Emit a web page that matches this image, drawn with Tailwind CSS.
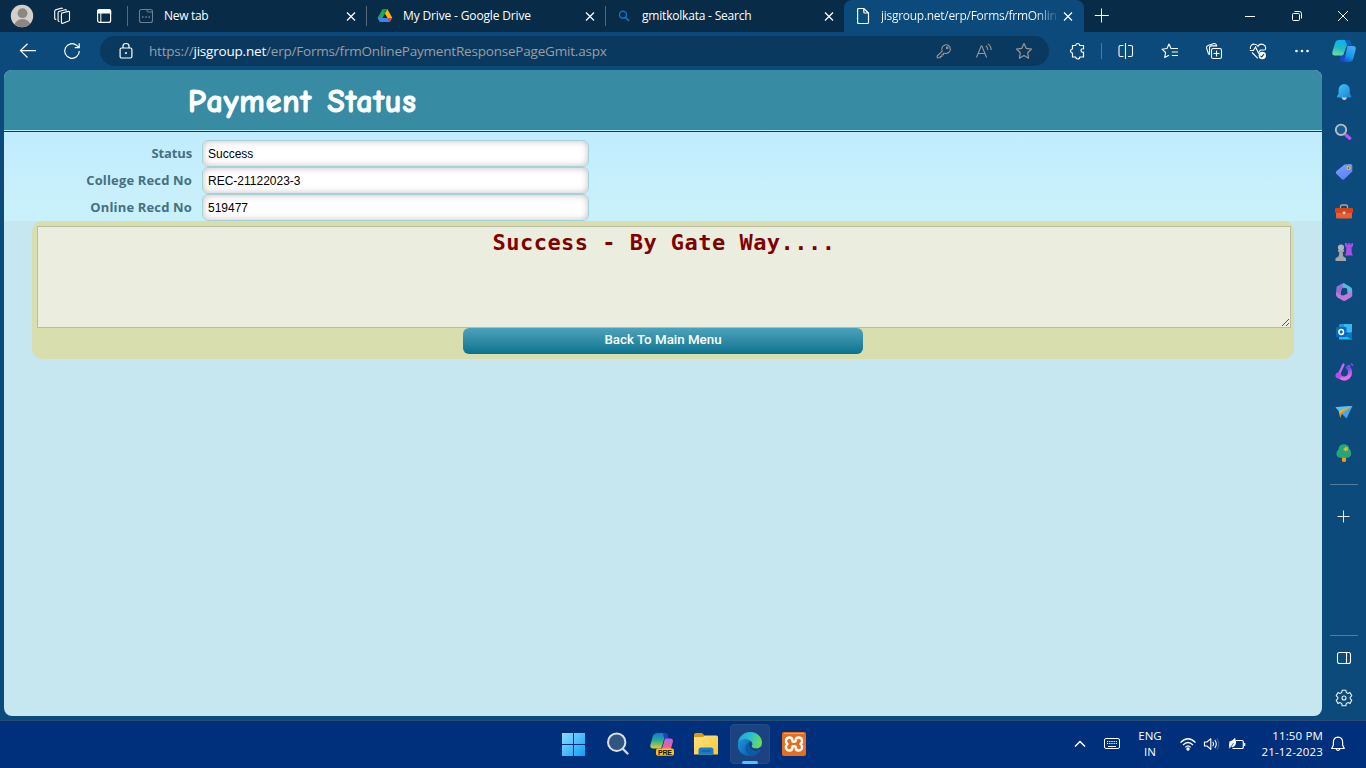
<!DOCTYPE html>
<html lang="en">
<head>
<meta charset="utf-8">
<title>Payment Status</title>
<script src="https://cdn.jsdelivr.net/npm/@tailwindcss/browser@4"></script>
</head>
<body class="h-[768px] w-[1366px] overflow-hidden bg-[#0b4a7a] font-['Open_Sans','Noto_Sans',sans-serif] text-white flex flex-col">

<!-- Tab strip -->
<header class="flex h-8 shrink-0 bg-[#082b47] text-[12px]">
  <div class="flex w-[43px] items-center justify-center">
    <svg width="24" height="24" viewBox="0 0 24 24"><defs><clipPath id="av"><circle cx="12" cy="12" r="11.2"/></clipPath></defs><circle cx="12" cy="12" r="11.2" fill="#d3d0cc"/><g clip-path="url(#av)" fill="#8c8782"><circle cx="12.5" cy="9.2" r="4.9"/><ellipse cx="12.5" cy="21.5" rx="8" ry="6.5"/></g></svg>
  </div>
  <div class="flex w-[38px] items-center justify-center">
    <svg width="18" height="18" viewBox="0 0 18 18" fill="none" stroke="#fff" stroke-width="1.1" stroke-linejoin="round"><path d="M8.2 6.2l7-1.8q1.3-.2 1.3 1v7.400q0 .8-.8 1.200l-5.800 2.300q-1.500.4-1.500-1V7.200q0-.8.6-1"/><path d="M6.500 14.500q-1.300.1-1.400-1V5.800q0-1 .8-1.300L12 2.700q1.200-.2 1.500.8M3.300 12.400q-1.500.1-1.600-1V4.200q0-1 .8-1.300L8 1.200q1.200-.2 1.600.6"/></svg>
  </div>
  <div class="flex w-[46px] items-center justify-center">
    <svg width="16" height="16" viewBox="0 0 16 16"><rect x="1.600" y="1.600" width="13" height="12.800" rx="2" fill="none" stroke="#fff" stroke-width="1.200"/><path d="M1 5.500V3.500Q1 1 3.500 1h9.200Q15.200 1 15.200 3.500v2z" fill="#fff"/><path d="M4.800 5v9" stroke="#fff"/></svg>
  </div>

  <div class="flex w-[239px] items-center pl-[11px] pr-[9px] relative before:absolute before:left-0 before:top-1.5 before:h-5 before:w-px before:bg-[#536b7e]">
    <svg class="shrink-0" width="16" height="16" viewBox="0 0 16 16" fill="none" stroke="#6b8091" stroke-width="1.100"><path d="M1.500 3.500q0-2 2-2H9v1Q9 4 10.500 4h4v8.500q0 2-2 2h-9q-2 0-2-2zM9 1.500h3.500q2 0 2 2V4"/><path d="M4 9h1.500M7.300 9h1.500M10.500 9H12" stroke-width="1.400"/></svg>
    <span class="ml-2.5 flex-1 whitespace-nowrap tracking-[-0.3px]">New tab</span>
    <svg width="12" height="12" viewBox="0 0 12 12" stroke="#fff" stroke-width="1.200"><path d="M2 2.500l8 8M10 2.500l-8 8"/></svg>
  </div>
  <div class="flex w-[239px] items-center pl-[11px] pr-[9px] relative before:absolute before:left-0 before:top-1.5 before:h-5 before:w-px before:bg-[#536b7e]">
    <svg class="shrink-0" width="16" height="16" viewBox="0 0 16 16"><path d="M5.500 1.200h5L15.300 10h-4.800z" fill="#ffba00"/><path d="M5.500 1.200L.6 9.800 3 14l5.100-8.800z" fill="#20a55a"/><path d="M.6 9.900h10.200L13 14H3z" fill="#3f83ed"/><path d="M10.600 10h4.700L13 14z" fill="#ea4335"/><path d="M5.500 1.200h5L8 5.500z" fill="#148745"/></svg>
    <span class="ml-2.5 flex-1 whitespace-nowrap tracking-[-0.15px]">My Drive - Google Drive</span>
    <svg width="12" height="12" viewBox="0 0 12 12" stroke="#fff" stroke-width="1.200"><path d="M2 2.500l8 8M10 2.500l-8 8"/></svg>
  </div>
  <div class="flex w-[239px] items-center pl-[11px] pr-[9px] relative before:absolute before:left-0 before:top-1.5 before:h-5 before:w-px before:bg-[#536b7e]">
    <svg class="shrink-0" width="16" height="16" viewBox="0 0 16 16" fill="none" stroke="#1671c5" stroke-width="1.500"><circle cx="7" cy="6.700" r="3.500"/><path d="M9.500 9.300L13 13" stroke-width="1.800"/></svg>
    <span class="ml-2.5 flex-1 whitespace-nowrap tracking-[-0.2px]">gmitkolkata - Search</span>
    <svg width="12" height="12" viewBox="0 0 12 12" stroke="#fff" stroke-width="1.200"><path d="M2 2.500l8 8M10 2.500l-8 8"/></svg>
  </div>
  <div class="flex w-[240px] items-center rounded-t-lg bg-[#0b4a7a] pl-[11px] pr-[10px]">
    <svg class="shrink-0" width="16" height="18" viewBox="0 0 16 18" fill="none" stroke="#fff" stroke-width="1.200" stroke-linejoin="round"><path d="M2.600 2.500q0-1 1-1h5.200L13.500 6v9.500q0 1-1 1H3.600q-1 0-1-1zM8.800 1.500V5q0 1 1 1h3.700"/></svg>
    <span class="ml-2.5 whitespace-nowrap tracking-[-0.28px] bg-linear-to-r from-white from-88% to-white/15 bg-clip-text text-transparent">jisgroup.net/erp/Forms/frmOnlin</span>
    <span class="flex-1"></span>
    <svg class="shrink-0" width="12" height="12" viewBox="0 0 12 12" stroke="#fff" stroke-width="1.200"><path d="M2 2.500l8 8M10 2.500l-8 8"/></svg>
  </div>
  <div class="flex w-[35px] items-center justify-center"><svg width="16" height="16" viewBox="0 0 16 16" stroke="#fff"><path d="M.8 7.500h14M7.500 .5v14"/></svg></div>
  <div class="flex-1"></div>
  <div class="flex w-[46px] items-center justify-center"><svg width="12" height="12" viewBox="0 0 12 12" stroke="#fff"><path d="M1 6.500h10"/></svg></div>
  <div class="flex w-[47px] items-center justify-center"><svg width="12" height="12" viewBox="0 0 12 12" fill="none" stroke="#fff"><rect x="1.500" y="3.500" width="7" height="7" rx="1"/><path d="M3.500 1.500h5q2 0 2 2v5"/></svg></div>
  <div class="flex w-[46px] items-center justify-center"><svg width="12" height="12" viewBox="0 0 12 12" stroke="#fff"><path d="M1 1l10 10M11 1L1 11"/></svg></div>
</header>

<!-- Toolbar -->
<nav class="flex h-[38px] shrink-0 items-center pl-1.5">
  <div class="flex w-11 justify-center"><svg width="18" height="18" viewBox="0 0 18 18" fill="none" stroke="#fff" stroke-width="1.200"><path d="M17 8.600H1.500M8.500 1.800L1.500 8.600l7 6.900"/></svg></div>
  <div class="flex w-11 justify-center"><svg width="18" height="18" viewBox="0 0 18 18" fill="none" stroke="#fff" stroke-width="1.200"><path d="M16.300 9A7.300 7.300 0 1 1 13.700 3.400L16 5.500M16.200 1.200V5.600H11.800"/></svg></div>
  <div class="ml-1.5 flex h-[30px] w-[949px] items-center rounded-full bg-[#0a395f] pl-[18px] pr-[5px]">
    <svg class="shrink-0" width="16" height="18" viewBox="0 0 16 18" fill="none" stroke="#fff" stroke-width="1.200"><rect x="2.100" y="6" width="11.800" height="10" rx="1.500"/><path d="M5 6V4Q5 1.500 8 1.500T11 4v2"/><circle cx="8" cy="11" r="1" fill="#fff" stroke="none"/></svg>
    <span class="ml-[15px] flex-1 whitespace-nowrap text-[13.5px] tracking-[-0.2px] text-[#999fa4]">https://<span class="text-white">jisgroup.net</span>/erp/Forms/frmOnlinePaymentResponsePageGmit.aspx</span>
    <div class="flex w-10 justify-center"><svg width="16" height="16" viewBox="0 0 16 16" fill="none" stroke="#969896" stroke-width="1.100" stroke-linejoin="round"><path d="M6.300 8.200A4.300 4.300 0 1 1 9 10.300L7.500 10.200V11.800H5.800V13.500H4.200V14.700H1.200V13z"/><circle cx="11.200" cy="4.900" r=".8"/></svg></div>
    <div class="flex w-10 justify-center"><svg width="18" height="16" viewBox="0 0 18 16" fill="none" stroke="#969896" stroke-width="1.100"><path d="M1.500 14.500L6.200 3h.7l4.700 11.500M3.200 10.500h6.600M10.800 2.800q2 1.500 2 4.200M12.800.9q3.400 2.200 3.400 6.100"/></svg></div>
    <div class="flex w-10 justify-center"><svg width="18" height="18" viewBox="0 0 18 18" fill="none" stroke="#969896" stroke-width="1.200" stroke-linejoin="round"><path d="M9 1.500l2.300 4.900 5.200.7-3.800 3.700.9 5.400L9 13.600l-4.600 2.600.9-5.400L1.500 7.100l5.200-.7z"/></svg></div>
  </div>
  <div class="ml-1.5 flex w-11 justify-center"><svg width="18" height="18" viewBox="0 0 18 18" fill="none" stroke="#fff" stroke-width="1.200" stroke-linejoin="round"><path d="M4.500 3.500h3.200a2 2 0 0 1 4 0H15.500v3.300q-2.300-.3-2.500 1.700.2 2 2.500 1.700v4.800h-3.800a2 2 0 0 1-4 0H4.500v-4a2 2 0 0 1 0-4z"/></svg></div>
  <div class="mx-0.5 h-4 w-px bg-[#4879a0]"></div>
  <div class="flex w-11 justify-center"><svg width="18" height="18" viewBox="0 0 18 18" fill="none" stroke="#fff" stroke-width="1.100"><path d="M8.500 1v16M6.500 3.500H3.500q-1.500 0-1.500 1.500v8q0 1.500 1.500 1.500h3M11 3.500h3q1.500 0 1.500 1.500v8q0 1.500-1.500 1.500h-3"/></svg></div>
  <div class="flex w-11 justify-center"><svg width="18" height="18" viewBox="0 0 18 18" fill="none" stroke="#fff" stroke-width="1.100" stroke-linejoin="round"><path d="M12.500 6.500H10L8 2 6 6.500l-5 .7 3.600 3.300-.9 5 4.300-2.300M10 6.500h7M10.800 10H17M10.800 13.500H17"/></svg></div>
  <div class="flex w-11 justify-center"><svg width="18" height="18" viewBox="0 0 18 18" fill="none" stroke="#fff" stroke-width="1.100"><rect x="6.500" y="6.500" width="10" height="10" rx="1.800"/><path d="M11.500 8.500v6M8.500 11.500h6M4.800 12.800L3.500 12 1.500 5.800Q1.200 4 3 3.400L9 1.500q1.700-.3 2.300 1.200l.3 1.200H6.500q-2 0-2 2v6"/></svg></div>
  <div class="flex w-11 justify-center"><svg width="18" height="18" viewBox="0 0 18 18" fill="none" stroke="#fff" stroke-width="1.100"><path d="M1.500 7C.8 3.500 3.500 1.800 5.700 2.200 7.500 2.400 8.500 3.500 9 4.300 10 2.500 12 1.700 14.200 2.500 16.500 3.500 17 6 16.200 8M.8 8.500h3.700L6.500 5l3 6 1.800-3h4.400M3 10.500l5.800 5.800"/><circle cx="13.300" cy="13.500" r="3.700" fill="#fff" stroke="none"/><path d="M11.500 13.800l1.200 1.100 2.300-2.700" stroke="#0b4a7a"/></svg></div>
  <div class="flex w-11 justify-center"><svg width="16" height="6" viewBox="0 0 16 6" fill="#fff"><circle cx="2.500" cy="3" r="1.300"/><circle cx="8" cy="3" r="1.300"/><circle cx="13.500" cy="3" r="1.300"/></svg></div>
  <div class="flex w-10 justify-center"><svg width="26" height="26" viewBox="0 0 26 26"><defs><linearGradient id="c1" x1=".5" x2=".2" y1="0" y2="1"><stop stop-color="#0db2ee"/><stop offset=".5" stop-color="#22b9c8"/><stop offset="1" stop-color="#6fe09b"/></linearGradient><linearGradient id="c2" x1=".6" x2=".2" y1="0" y2="1"><stop stop-color="#49a7f2"/><stop offset=".55" stop-color="#179bed"/><stop offset="1" stop-color="#1748d4"/></linearGradient></defs><path d="M9 17h6l2 7H12q-2.500 0-3-2z" fill="#1849c9"/><path d="M8 2h9q2 0 2.500 2l.8 3H16l-3.500 9.500Q12 17.500 10.500 17.500H4q-3.500 0-2.500-4L4 5Q5 2 8 2z" fill="url(#c1)"/><path d="M14 2h3q2 0 2.500 2l1 3.500H16z" fill="#075fb5"/><path d="M16.500 8H22q3.500 0 2.700 3.500l-2.500 9.500q-.8 3-3.700 3H11q2-.5 2.700-3l2.300-11z" fill="url(#c2)"/></svg></div>
</nav>

<div class="flex min-h-0 flex-1">
  <!-- Web page -->
  <main class="ml-1 h-[646px] w-[1318px] overflow-hidden rounded-lg bg-[#c6e7f0]">
    <div class="flex h-[60px] items-center bg-[#378ba3] pl-[184px]">
      <h1 class="whitespace-nowrap pt-1 font-['Comic_Sans_MS','Comic_Neue',Lato,sans-serif] text-[32px] font-black leading-none tracking-[0.9px] [word-spacing:3px] [-webkit-text-stroke:1px_white]">Payment Status</h1>
    </div>
    <div class="h-px bg-[#b8edfc]"></div>
    <div class="h-px bg-[#123a4c]"></div>
    <form class="h-[89px] bg-linear-to-b from-[#c0ecff] from-0% via-[#c8f0fb] via-70% to-[#c8f1fa] pt-2 text-[13px] tracking-[0.15px]">
      <div class="flex h-[27px] items-center"><label class="w-[188px] text-right font-bold tracking-[-0.15px] text-[#456f82]">Status</label><div class="ml-2.5 flex h-[27px] w-[387px] items-center rounded-md border border-[#a7d1d9] bg-white pl-[5px] font-['Liberation_Sans',Arial,sans-serif] text-[12px] tracking-normal text-black shadow-[inset_0_0_7px_rgba(0,0,0,.25)]">Success</div></div>
      <div class="flex h-[27px] items-center"><label class="w-[188px] text-right font-bold text-[#456f82]">College Recd No</label><div class="ml-2.5 flex h-[27px] w-[387px] items-center rounded-md border border-[#a7d1d9] bg-white pl-[5px] font-['Liberation_Sans',Arial,sans-serif] text-[12px] tracking-normal text-black shadow-[inset_0_0_7px_rgba(0,0,0,.25)]">REC-21122023-3</div></div>
      <div class="flex h-[27px] items-center"><label class="w-[188px] text-right font-bold text-[#456f82]">Online Recd No</label><div class="ml-2.5 flex h-[27px] w-[387px] items-center rounded-md border border-[#a7d1d9] bg-white pl-[5px] font-['Liberation_Sans',Arial,sans-serif] text-[12px] tracking-normal text-black shadow-[inset_0_0_7px_rgba(0,0,0,.25)]">519477</div></div>
    </form>
    <section class="ml-7 h-[138px] w-[1262px] rounded-[10px] bg-[#d8deae] pl-[5px] pt-[5px]">
      <div class="relative h-[102px] w-[1254px] border border-[#b9bda3] bg-[#ebeede] pt-px text-center font-['DejaVu_Sans_Mono',monospace] text-[22px] font-bold leading-[30px] tracking-[0.47px] text-[#800000]">Success - By Gate Way....
        <svg class="absolute bottom-0 right-0" width="9" height="9" viewBox="0 0 9 9" stroke="#555" fill="none"><path d="M1 8L8 1M5 8l3-3"/></svg>
      </div>
      <button class="ml-[426px] block h-[26px] w-[400px] rounded-md bg-linear-to-b from-[#4ba3bb] to-[#05738f] pb-0.5 text-center font-[Roboto,'Liberation_Sans',sans-serif] text-[13.33px] font-medium leading-[24px]">Back To Main Menu</button>
    </section>
  </main>

  <!-- Edge sidebar -->
  <aside class="flex w-11 flex-col items-center pt-0.5">
    <div class="flex h-10 items-center"><svg width="18" height="18" viewBox="0 0 18 18"><defs><linearGradient id="bl" x2="1" y2="1"><stop stop-color="#49c5f5"/><stop offset="1" stop-color="#1484d7"/></linearGradient></defs><path d="M6.500 14h5.500q-.4 3-2.700 3T6.500 14z" fill="#d5d0cb"/><path d="M9.200 1a5.600 5.600 0 0 1 5.600 5.700v4l1.600 2.500q.3 1.300-1 1.300H3q-1.300 0-1-1.300l1.600-2.500v-4A5.600 5.600 0 0 1 9.200 1z" fill="url(#bl)"/></svg></div>
    <div class="flex h-10 items-center pb-px pr-0.5"><svg width="18" height="18" viewBox="0 0 18 18"><path d="M12 12l3.700 3.200" stroke="#c44cf3" stroke-width="3.400" stroke-linecap="round"/><circle cx="7" cy="6.800" r="5.200" fill="#155f98" stroke="#bdbbb9" stroke-width="1.900"/></svg></div>
    <div class="flex h-10 items-center"><svg width="18" height="18" viewBox="0 0 18 18"><defs><linearGradient id="tg" x2=".6" y2="1"><stop stop-color="#78a6ff"/><stop offset="1" stop-color="#607ef5"/></linearGradient></defs><path d="M9.500 1.500L15.700 1q1.500 0 1.600 1.500v6L9.500 16q-1.400 1.300-2.800 0L1.300 10.800Q.3 9.500 1.300 8.300z" fill="url(#tg)"/><circle cx="13.500" cy="5" r="1.500" fill="#5e5e50" stroke="#f6c915" stroke-width="1.200"/></svg></div>
    <div class="flex h-10 items-center"><svg width="20" height="18" viewBox="0 0 20 18"><path d="M6.500 5V3.500Q6.500 2 8 2h4q1.500 0 1.500 1.500V5" fill="none" stroke="#aaa7a3" stroke-width="1.300"/><rect x="2" y="8" width="16" height="7.500" rx="1" fill="#e65e34"/><rect x="1" y="5" width="18" height="5" rx="1" fill="#d84218"/><circle cx="10" cy="9.800" r="1.500" fill="#d7d2ce"/></svg></div>
    <div class="flex h-10 items-center"><svg width="20" height="20" viewBox="0 0 20 20"><path d="M11 1h2v1.500h1.300V1h1.800v1.500h1.300V1H19v3l-1.500 1.500.3 5.500 1 2.500H11l1-2.500.4-5.500L11 4z" fill="#b04ced"/><circle cx="7" cy="5.500" r="3.100" fill="#b3b4b5"/><path d="M4 8h6v1.500l-1.300.8.5 4 2.800 1.900V19H1.500v-2.800L4.700 14.300l.6-4L4 9.500z" fill="#a3a5a6"/></svg></div>
    <div class="flex h-10 items-center"><svg width="20" height="20" viewBox="0 0 20 20"><path d="M10 1L7 2 2.500 4.700 2 13l4.500 2.500L7.500 8l6-3.500z" fill="#9570d3"/><path d="M9.500 1l7 4q1.700 1 1.700 3v6l-5-2.600V7L8 4.500z" fill="#55b8de"/><path d="M2 10l6 3.500 9-4 1.200 3.500q0 1.600-1.500 2.500l-5 3q-1.500.8-3 0L3.500 15.500Q2 14.500 2 12z" fill="#c078da"/><path d="M8 6.200h4.500l1 5.300-4 2L7 12z" fill="#0b4a7a"/></svg></div>
    <div class="flex h-10 items-center"><svg width="18" height="18" viewBox="0 0 18 18"><rect x="4" y="1" width="13" height="9" rx="1" fill="#2295dc"/><path d="M9 1h8v8H9z" fill="#39b9ee"/><path d="M4 9l7 3 6-3v7.500H4z" fill="#19bdef"/><path d="M17 9v7.500L10.500 13z" fill="#0873c4"/><rect x="1" y="4" width="10.500" height="10" rx="1" fill="#0869bf"/><ellipse cx="6.200" cy="9" rx="2.300" ry="2.500" fill="none" stroke="#fff" stroke-width="1.500"/></svg></div>
    <div class="flex h-10 items-center"><svg width="20" height="20" viewBox="0 0 20 20" fill="none" stroke-linecap="round"><defs><linearGradient id="ds" x2=".3" y2="1"><stop stop-color="#7445dd"/><stop offset="1" stop-color="#e56fee"/></linearGradient></defs><path d="M15.500 7.500q1.700 5-1.500 7.700-4 3-8-.2" stroke="url(#ds)" stroke-width="4"/><path d="M9.500 2.500L5 12" stroke="#c46af3" stroke-width="2.300"/><circle cx="4.500" cy="13.500" r="3" fill="#b64ceb"/><path d="M13.500 5.500l1.500-1" stroke="#714be6" stroke-width="3.500"/><path d="M17.500 2l1 1" stroke="#a54aef" stroke-width="1.500"/></svg></div>
    <div class="flex h-10 items-center"><svg width="20" height="18" viewBox="0 0 20 18"><path d="M1.500 4L18.500 3l-6 12.500-4-4z" fill="#43a4ef"/><path d="M1.500 4.200L18.500 3 6 9.500z" fill="#55c4f5"/><path d="M18.500 3L7.500 9.500 6 14.500 4.800 8.300z" fill="#f7ae20"/><path d="M18.500 3L8 11l-2 4v-4.500z" fill="#dd941e"/></svg></div>
    <div class="flex h-10 items-center pt-px"><svg width="18" height="20" viewBox="0 0 18 20"><path d="M7 13h4v4.500q0 1.500-2 1.500t-2-1.500z" fill="#f39a18"/><path d="M9 1.300c3.500 0 5 2.200 5.200 4.400 3.200 3 2.400 9-2 9H5.500C.5 14.700.5 9 3.500 6.500 3.700 3.500 5.500 1.300 9 1.300z" fill="#26a577"/><path d="M10.500 3.200l1 1.100 1.800.2-.7 1.400.7 1.600h-1.800l-1.300 1.300-.7-1.700-1.600-.9L9.700 5z" fill="#f4b414"/></svg></div>
    <div class="mt-3 h-px w-7 bg-[#517fa3]"></div>
    <div class="mt-3 flex h-10 items-center"><svg width="14" height="14" viewBox="0 0 14 14" stroke="#dfeaf2"><path d="M.5 6.500h12M6.500 .5v12"/></svg></div>
    <div class="flex-1"></div>
    <div class="mb-0.5 h-px w-7 bg-[#517fa3]"></div>
    <div class="flex h-10 items-center"><svg width="16" height="16" viewBox="0 0 16 16" fill="none" stroke="#fff" stroke-width="1.100"><rect x="1.500" y="2.500" width="13" height="11" rx="2"/><path d="M10.500 2.500v11"/></svg></div>
    <div class="mb-0.5 flex h-10 items-center"><svg width="18" height="18" viewBox="0 0 18 18" fill="none" stroke="#eef4f8" stroke-width="1.100" stroke-linejoin="round"><path d="M7.200 1.200h3.600l.5 2.300 1.500.9 2.200-.8 1.800 3.100L15.200 8.300v1.400l1.600 1.600-1.800 3.100-2.200-.8-1.500.9-.5 2.300H7.200l-.5-2.300-1.500-.9-2.200.8-1.800-3.100 1.600-1.600V8.300L1.200 6.700 3 3.600l2.200.8 1.500-.9z"/><circle cx="9" cy="9" r="2"/></svg></div>
  </aside>
</div>

<!-- Taskbar -->
<footer class="flex h-12 shrink-0 items-center border-t border-[#2c4a72] bg-[#00307b] pb-0.5">
  <div class="ml-[552px] flex">
    <div class="flex h-10 w-11 items-center justify-center"><svg width="24" height="24" viewBox="0 0 24 24"><defs><linearGradient id="win" gradientUnits="userSpaceOnUse" x2="24" y2="24"><stop stop-color="#8ce0ff"/><stop offset="1" stop-color="#0d9bf5"/></linearGradient></defs><path d="M0 1h11v11H0zM12 1H23v11H12zM0 13h11v11H0zM12 13H23v11H12z" fill="url(#win)"/></svg></div>
    <div class="flex h-10 w-11 items-center justify-center"><svg width="24" height="24" viewBox="0 0 24 24"><path d="M16.500 16.500l5 5" stroke="#d4d7dc" stroke-width="2.400" stroke-linecap="round"/><circle cx="10.700" cy="10.200" r="8.700" fill="#315583" stroke="#dedfe2" stroke-width="2"/></svg></div>
    <div class="flex h-10 w-11 items-center justify-center"><svg width="24" height="24" viewBox="0 0 24 24"><defs><linearGradient id="p1" x2="0" y2="1"><stop stop-color="#1774df"/><stop offset=".5" stop-color="#28b28b"/><stop offset="1" stop-color="#e9cc33"/></linearGradient><linearGradient id="p2" x2="0" y2="1"><stop stop-color="#ad68ed"/><stop offset=".6" stop-color="#ed6196"/><stop offset="1" stop-color="#f59a4b"/></linearGradient></defs><path d="M7.500 1H15q2 0 2.500 2l.8 3H14.500l-3 9.500q-.5 1-2 1H3q-3.500 0-2.500-4L3 4q1-3 4.500-3z" fill="url(#p1)"/><path d="M13 1h2q2 0 2.500 2l1 3.500H14z" fill="#1747b4"/><path d="M15 6.500h5q3.700 0 2.800 3.500L20 20h-9z" fill="url(#p2)"/><rect x="6" y="16.500" width="18" height="7.300" rx="2" fill="#ffc20b"/><text x="8" y="22.700" font-family="Liberation Sans, sans-serif" font-weight="700" font-size="7" textLength="14" fill="#111">PRE</text></svg></div>
    <div class="flex h-10 w-11 items-center justify-center"><svg width="26" height="24" viewBox="0 0 26 24"><defs><linearGradient id="fo" x2="1" y2="1"><stop stop-color="#ffe287"/><stop offset="1" stop-color="#ffc72e"/></linearGradient></defs><path d="M1 3q0-2 2-2h6l3 3v4H1z" fill="#d89a13"/><path d="M1 5h9l2-1.500h11.500q1.500 0 1.500 1.500v17.500H1z" fill="url(#fo)"/><path d="M5.500 22.500V18q0-2.500 2.500-2.500h10q2.500 0 2.500 2.500v4.500z" fill="#127dd0"/><path d="M9 19h8" stroke="#0b5398" stroke-linecap="round"/></svg></div>
    <div class="relative mx-0.5 flex h-10 w-10 items-center justify-center rounded border border-[#254c87] bg-[#1c4381]"><svg width="26" height="26" viewBox="0 0 26 26"><defs><linearGradient id="e1" x2="1" y2=".3"><stop stop-color="#229edb"/><stop offset=".55" stop-color="#2ac0cd"/><stop offset="1" stop-color="#65d961"/></linearGradient><linearGradient id="e2" x2="1" y2="1"><stop stop-color="#1a98df"/><stop offset="1" stop-color="#0b59aa"/></linearGradient></defs><circle cx="13" cy="13" r="12" fill="#0c69b8"/><path d="M1 12C2 5 7 1 13 1c7 0 12 5 12 10.500 0 4-3 6-6 6-3 0-5-1.300-4.300-2.700 1.500-2 .5-5-3.700-6C7 8 3 9 1 12z" fill="url(#e1)"/><path d="M1 13c1.500-3 4-5 7.500-4.700 2 .2 3.500 1 4.500 2-5 2-6 8.500-2.500 12.200q1.500 1.500 3 2.400C6 25.500 0 20 1 13z" fill="url(#e2)"/><path d="M13.500 10.500q-3.500 3-1.700 7 2.700 4.500 9 2.500l2.500-1Q20 25 13.500 25 6 18.500 10 13q1-1.500 3.500-2.500z" fill="#0c59a5"/><path d="M13.500 10.500c-3 2.500-2.500 8 3.500 9.500 3 .7 6-1.500 7-1.500l-1 1.500 4-1-2.500-3.500c-1.500 1.500-3.500 2-5.500 2-3 0-5-1.300-4.300-2.700q1.500-2-1.200-4.300z" fill="#1c4381"/></svg><span class="absolute -bottom-px left-[11px] h-[3px] w-4 rounded-full bg-[#4cc2ff]"></span></div>
    <div class="flex h-10 w-11 items-center justify-center"><svg width="24" height="24" viewBox="0 0 24 24"><rect width="24" height="24" rx="2" fill="#e66e20"/><path d="M2 1.500h20" stroke="#f3a46f"/><path d="M7.500 5.500C9.500 5.500 10.300 6.500 10.300 8.500q0 1.200 1.700 1.200t1.700-1.200C13.700 6.500 14.500 5.500 16.500 5.500c4 0 4.500 4.300 2.200 6.500 2.300 2.200 1.800 6.500-2.200 6.500-2 0-2.800-1-2.800-3q0-1.200-1.700-1.200t-1.700 1.200c0 2-.8 3-2.800 3-4 0-4.500-4.300-2.200-6.500C3 9.800 3.500 5.500 7.500 5.500z" fill="none" stroke="#fff" stroke-width="2.400"/></svg></div>
  </div>
  <div class="flex-1"></div>
  <div class="flex w-8 justify-center"><svg width="14" height="10" viewBox="0 0 14 10" fill="none" stroke="#fff" stroke-width="1.500"><path d="M2 7.500l5-5 5 5"/></svg></div>
  <div class="flex w-8 justify-center"><svg width="18" height="14" viewBox="0 0 18 14" fill="none" stroke="#fff"><rect x="1.500" y="1.500" width="15" height="10" rx="1.500"/><path d="M4 4.500h10.500M4 6.500h10.500" stroke-dasharray="1.200 1"/><path d="M5 9.500h8"/></svg></div>
  <div class="w-11 pt-px text-center text-[11.500px] leading-4">ENG<br>IN</div>
  <div class="flex w-8 justify-center"><svg width="18" height="14" viewBox="0 0 18 14" fill="none" stroke="#fff" stroke-width="1.200"><path d="M1.500 5.500q7.500-7.500 15 0M4 8q5-5 10 0M6.300 10.300q2.700-2.700 5.400 0"/><circle cx="9" cy="12" r="1.100" fill="#fff"/></svg></div>
  <div class="flex w-4 justify-center"><svg class="shrink-0" width="18" height="14" viewBox="0 0 18 14" fill="none" stroke="#fff" stroke-width="1.100" stroke-linejoin="round"><path d="M1.500 5v4H4l3.800 3.300V1.700L4 5zM9.800 4.800q1.600 2.200 0 4.400"/><path d="M11.800 3q3 4 0 8" /><path d="M13.800 1.500q4 5.500 0 11" stroke="#426596"/></svg></div>
  <div class="ml-[4px] flex w-[26px] justify-center"><svg width="18" height="14" viewBox="0 0 18 14" fill="none" stroke="#fff" stroke-width="1.200"><path d="M8 3.500h6q1.300 0 1.300 1.300v5.400q0 1.300-1.300 1.300H4.500M16.700 6v3"/><path d="M1.500 4.500Q5 4 7 .8q1.800 4 .5 7Q6 11 3 9.800l-1.500 2Q.5 7.500 1.500 4.500z" fill="#fff" stroke="none"/><path d="M2.500 10.500L5.500 6" stroke="#00307b" stroke-width=".7"/></svg></div>
  <div class="w-[73px] whitespace-nowrap text-right text-[11.500px] leading-4 tracking-[0.15px]">11:50 PM<br>21-12-2023</div>
  <div class="mr-[15px] ml-0.5 flex w-[26px] justify-center"><svg width="16" height="16" viewBox="0 0 16 16" fill="none" stroke="#fff" stroke-width="1.200" stroke-linejoin="round"><path d="M8 1.200q4.600.3 4.600 4.800v3l1.700 3.500H1.700L3.400 9V6Q3.400 1.500 8 1.200zM6 13q2 2.800 4 0"/></svg></div>
</footer>
</body>
</html>
